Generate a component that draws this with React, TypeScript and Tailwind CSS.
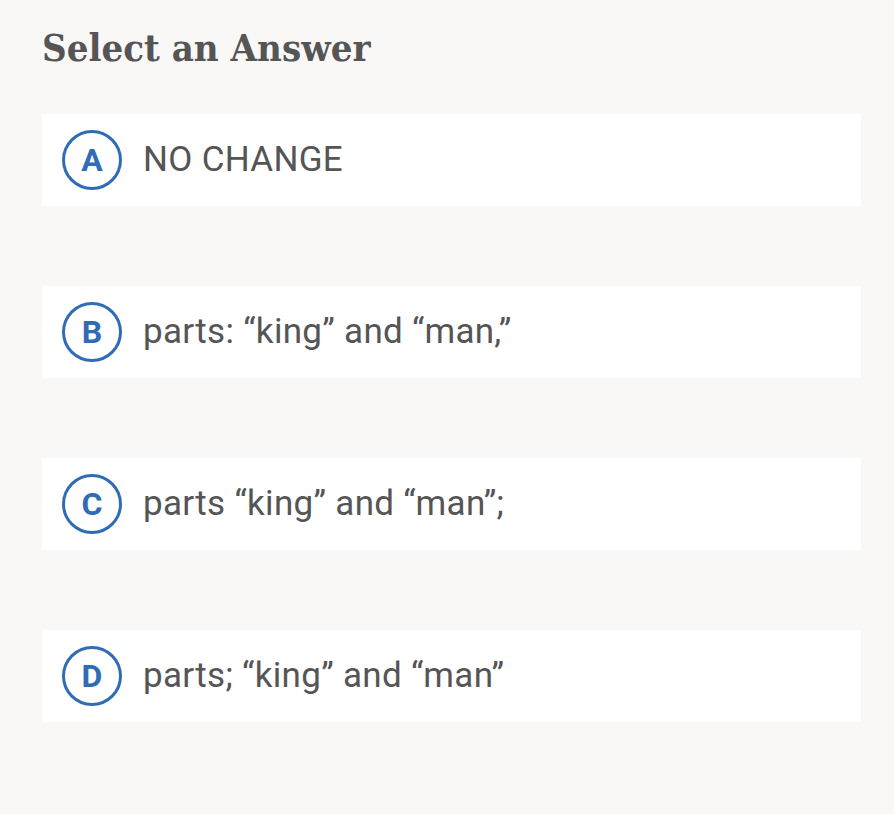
const options = [
  { letter: 'A', text: 'NO CHANGE' },
  { letter: 'B', text: 'parts: \u201cking\u201d and \u201cman,\u201d' },
  { letter: 'C', text: 'parts \u201cking\u201d and \u201cman\u201d;' },
  { letter: 'D', text: 'parts; \u201cking\u201d and \u201cman\u201d' },
];

export default function App() {
  return (
    <div className="min-h-[814px] w-[894px] bg-[#f9f8f6] px-[42px] pt-[26px]">
      <h2 className="font-['DejaVu_Serif_Condensed','DejaVu_Serif',serif] text-[38px] font-bold leading-[44px] text-[#555555]">
        Select an Answer
      </h2>
      <div className="mt-[44px] flex w-[819px] flex-col gap-[80px]">
        {options.map((o) => (
          <button
            key={o.letter}
            className="flex h-[92px] items-center gap-[21px] bg-white pl-[20px] text-left"
          >
            <span className="flex h-[60px] w-[60px] shrink-0 items-center justify-center rounded-full border-[3px] border-[#2f6cb5] font-['Roboto',sans-serif] text-[32px] font-bold text-[#2f6cb5]">
              {o.letter}
            </span>
            <span className="font-['Roboto',sans-serif] text-[35px] tracking-[0.3px] text-[#555555]">
              {o.text}
            </span>
          </button>
        ))}
      </div>
    </div>
  );
}
